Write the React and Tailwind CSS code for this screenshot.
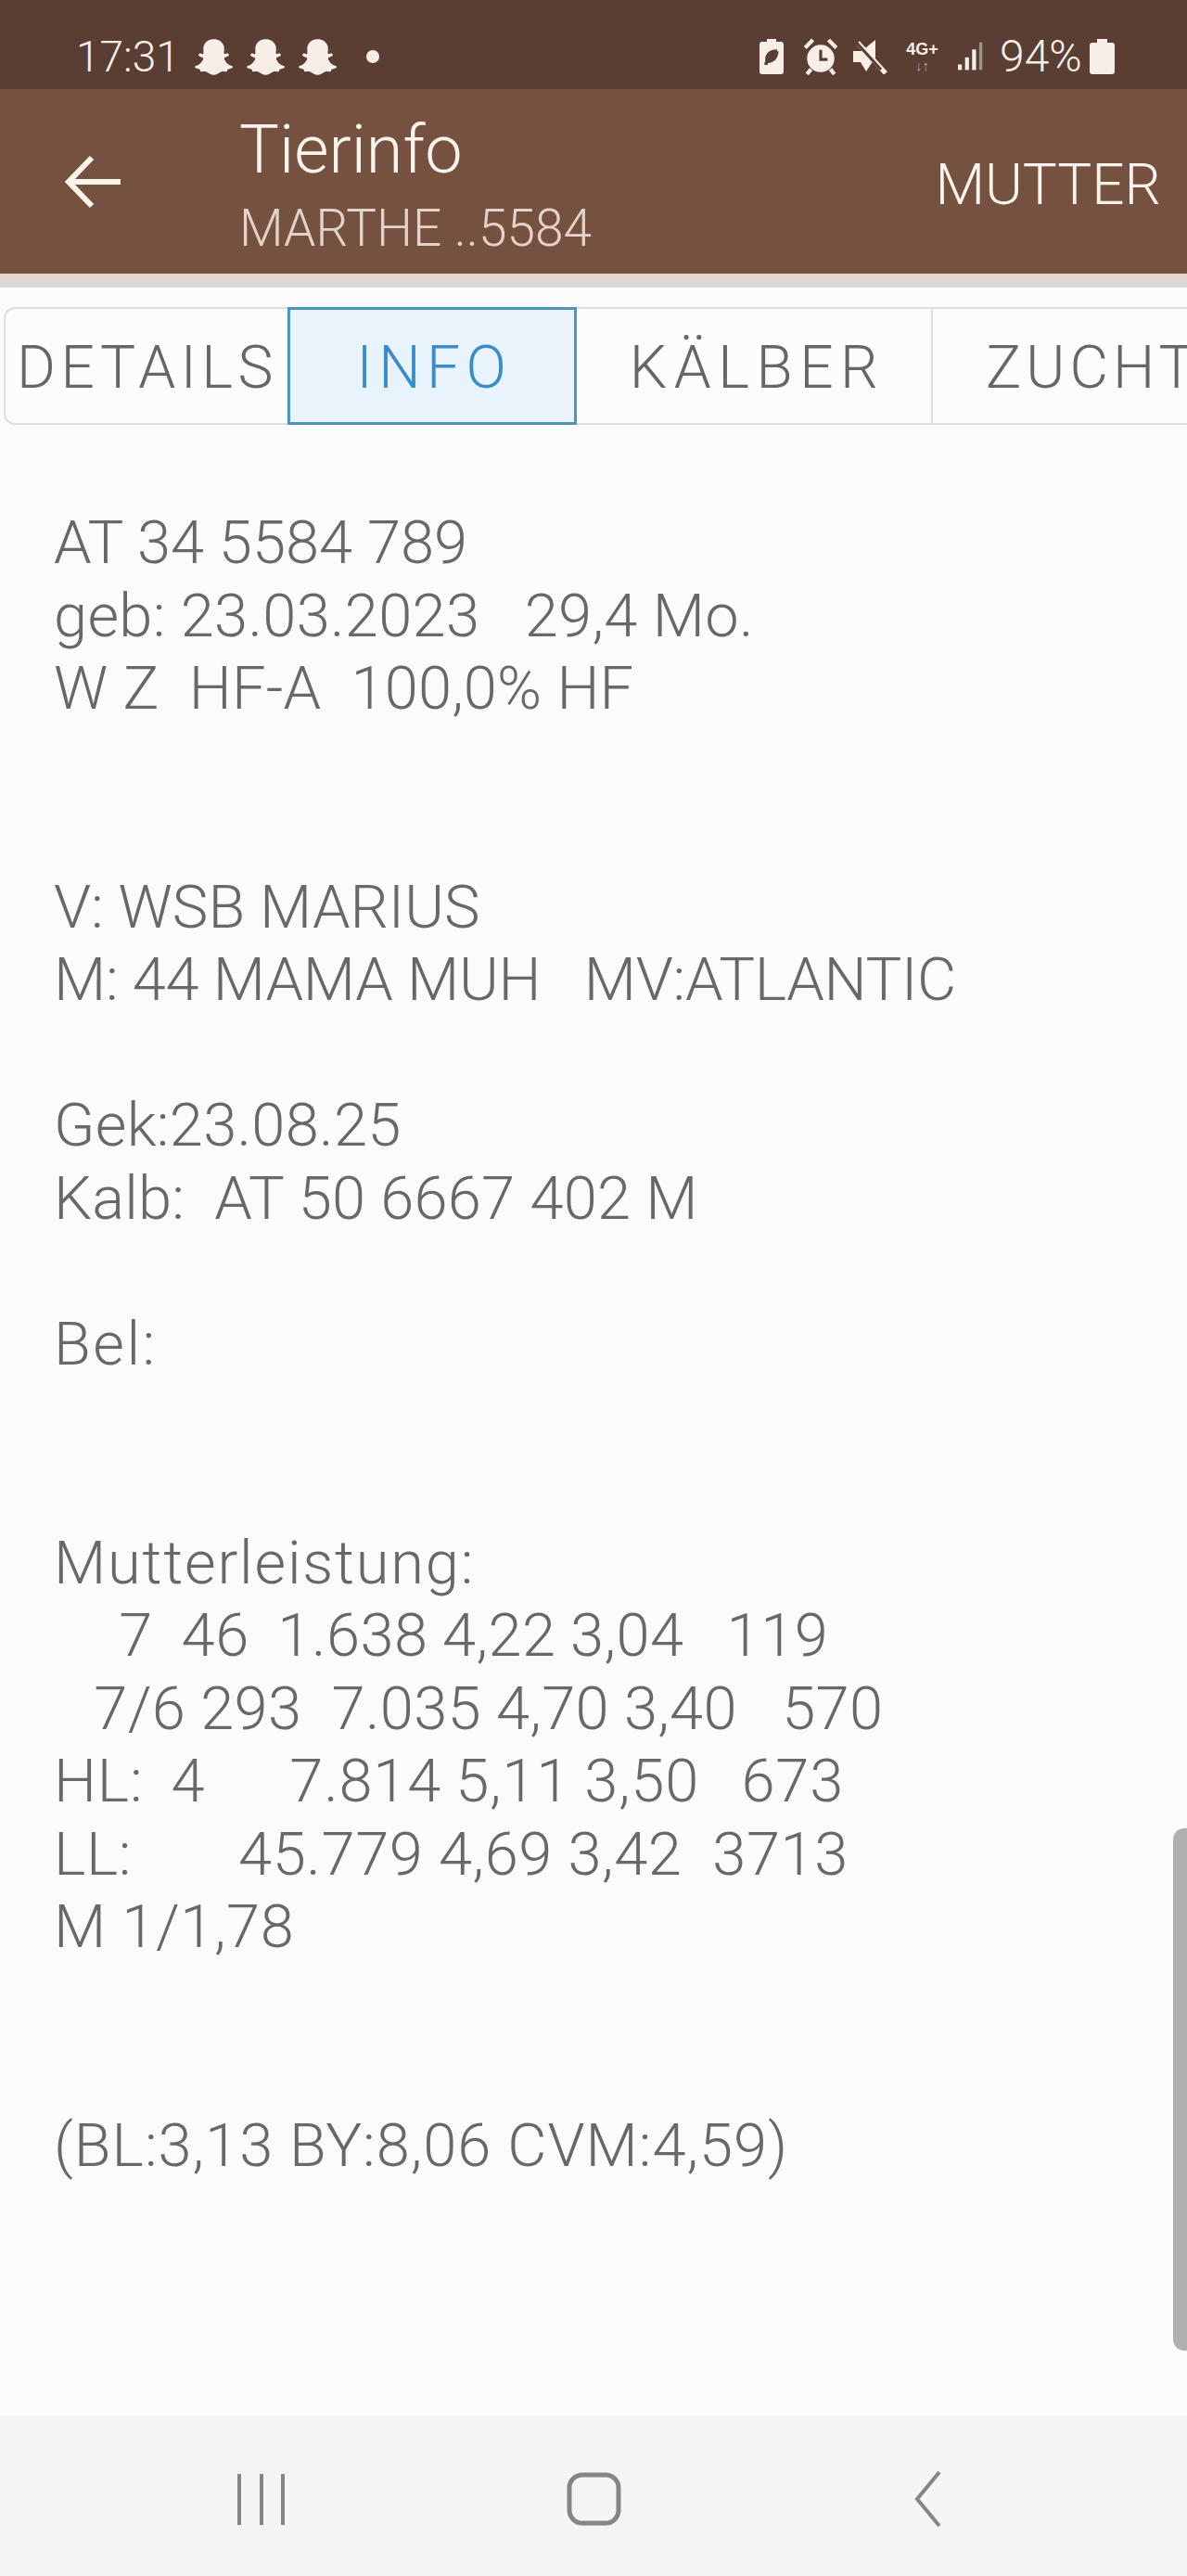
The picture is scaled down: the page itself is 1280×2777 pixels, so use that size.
import { FaSnapchatGhost } from 'react-icons/fa';

const bodyLines = [
  ['AT 34 5584 789', ''],
  ['geb: 23.03.2023   29,4 Mo.', 'tracking-[0.3px]'],
  ['W Z  HF-A  100,0% HF', 'tracking-[0.2px]'],
  ['', ''],
  ['', ''],
  ['V: WSB MARIUS', ''],
  ['M: 44 MAMA MUH   MV:ATLANTIC', 'tracking-[-0.3px]'],
  ['', ''],
  ['Gek:23.08.25', 'tracking-[0.3px]'],
  ['Kalb:  AT 50 6667 402 M', 'tracking-[0.2px]'],
  ['', ''],
  ['Bel:', 'tracking-[2.5px]'],
  ['', ''],
  ['', ''],
  ['Mutterleistung:', 'tracking-[1.8px]'],
  ['    7  46  1.638 4,22 3,04   119', 'ml-[9px] tracking-[0.5px] [word-spacing:-1px]'],
  ['  7/6 293  7.035 4,70 3,40   570', 'ml-[11px] tracking-[0.3px]'],
  ['HL:  4      7.814 5,11 3,50   673', 'tracking-[0.8px] [word-spacing:-1.5px]'],
  ['LL:       45.779 4,69 3,42  3713', 'tracking-[0.6px]'],
  ['M 1/1,78', 'tracking-[0.6px]'],
  ['', ''],
  ['', ''],
  ['(BL:3,13 BY:8,06 CVM:4,59)', 'tracking-[1px]'],
];

function StatusIcons() {
  return (
    <div className="flex items-center text-[#f7eee8]">
      {/* akku mit blatt */}
      <svg width="26" height="38" viewBox="0 0 26 38" className="mr-[22px]">
        <path d="M8 0h10v3h5a3 3 0 0 1 3 3v29a3 3 0 0 1-3 3H3a3 3 0 0 1-3-3V6a3 3 0 0 1 3-3h5z" fill="currentColor" />
        <path d="M19 13c-8 0-12 4-11 11-1 2-1 3-1 4M8 24c6 1 10-3 11-11" stroke="#5a3e33" strokeWidth="3.5" fill="#5a3e33" />
      </svg>
      {/* wecker */}
      <svg width="36" height="40" viewBox="0 0 34 38" className="mr-[16px]">
        <circle cx="17" cy="21" r="14" fill="currentColor" />
        <path d="M1 10 9 2M33 10l-8-8M7 32l-4 5M27 32l4 5" stroke="currentColor" strokeWidth="4" />
        <path d="M17 12v10h7" stroke="#5a3e33" strokeWidth="3" fill="none" />
      </svg>
      {/* stumm */}
      <svg width="38" height="38" viewBox="0 0 36 38" className="mr-[17px]">
        <path d="M0 13h9L24 1v19L14 35 8 25H0z" fill="currentColor" />
        <path d="M5 4l30 33" stroke="currentColor" strokeWidth="5" />
        <path d="M0 0l30 33" stroke="#5a3e33" strokeWidth="3" />
      </svg>
      <div className="mr-[18px] flex w-[41px] flex-col items-center font-['Liberation_Sans',sans-serif] leading-none">
        <span className="text-[18px] font-bold">4G+</span>
        <span className="mt-[1px] text-[15px] text-[#b5a59c]">↓↑</span>
      </div>
      {/* signal */}
      <svg width="28" height="36" viewBox="0 0 33 36" className="mr-[17px]">
        <rect x="0" y="28" width="5" height="7" fill="currentColor" />
        <rect x="9" y="19" width="5" height="16" fill="currentColor" />
        <rect x="18" y="9" width="5" height="26" fill="currentColor" />
        <rect x="27" y="0" width="4" height="35" fill="#a39289" />
      </svg>
      <span className="w-[92px] text-[48px] font-light leading-none">94%</span>
      {/* akku */}
      <svg width="27" height="38" viewBox="0 0 27 38" className="ml-[5px]">
        <path d="M8 0h11v4h5a3 3 0 0 1 3 3v28a3 3 0 0 1-3 3H3a3 3 0 0 1-3-3V7a3 3 0 0 1 3-3h5z" fill="currentColor" />
      </svg>
    </div>
  );
}

export default function App() {
  return (
    <div className="relative flex h-[2777px] w-[1280px] flex-col overflow-hidden bg-[#fbfbfb] font-['Roboto',sans-serif]">
      {/* Statusleiste */}
      <div className="flex h-[96px] shrink-0 items-center justify-between bg-[#5a3e33] pl-[82px] pr-[78px] pt-[26px]">
        <div className="flex items-center text-[#f7eee8]">
          <span className="w-[128px] text-[46px] font-light leading-none">17:31</span>
          <div className="flex gap-[15px]">
            <FaSnapchatGhost size={41} />
            <FaSnapchatGhost size={41} />
            <FaSnapchatGhost size={41} />
          </div>
          <div className="ml-[32px] size-[14px] rounded-full bg-[#f7eee8]" />
        </div>
        <StatusIcons />
      </div>

      {/* Titelleiste */}
      <div className="flex h-[199px] shrink-0 items-center bg-[#75513f] pr-[28px] text-[#fbf3ec]">
        <div className="ml-[70px] w-[188px]">
          <svg width="62" height="58" viewBox="0 0 62 58" fill="none" stroke="currentColor" strokeWidth="6">
            <path d="M60 29H6M29 3 4 29l25 26" />
          </svg>
        </div>
        <div className="flex-1 pt-[7px]">
          <div className="text-[72px] font-light leading-[80px]">Tierinfo</div>
          <div className="mt-[13px] text-[55px] font-light leading-[62px] text-[#e4d3ca]">MARTHE ..5584</div>
        </div>
        <span className="pt-[6px] text-[62px] font-light leading-none">MUTTER</span>
      </div>
      <div className="h-[15px] shrink-0 bg-gradient-to-b from-[#e6d4cd] to-[#dcd8d5]" />

      {/* Tabs */}
      <div className="ml-[4px] mt-[21px] flex h-[127px] shrink-0">
        <div className="flex w-[306px] items-center rounded-l-[12px] border-y-2 border-l-2 border-[#dedede] bg-[#fcfcfc] pl-[12px] pt-[5px] text-[64px] font-light tracking-[5.5px] text-[#666666]">DETAILS</div>
        <div className="flex w-[312px] items-center justify-center border-[3px] border-[#4a94bd] bg-[#e9f3fb] pl-[5px] pt-[5px] text-[64px] font-light tracking-[6.5px] text-[#3a8dcc]">INFO</div>
        <div className="flex w-[384px] items-center justify-center border-y-2 border-r-2 border-[#dedede] bg-[#fcfcfc] pl-[7px] pt-[5px] text-[64px] font-light tracking-[7.5px] text-[#666666]">KÄLBER</div>
        <div className="flex flex-1 items-center overflow-hidden border-y-2 border-[#dedede] bg-[#fcfcfc] pl-[57px] pt-[5px] text-[64px] font-light tracking-[5px] text-[#666666]">ZUCHT</div>
      </div>

      {/* Inhalt */}
      <div className="relative flex-1 pl-[58px] pt-[88px]">
        <div className="whitespace-pre text-[65px] font-light leading-[78.55px] text-[#686868]">
          {bodyLines.map(([line, cls], i) => (
            <div key={i} className={`h-[78.55px] ${cls}`}>{line}</div>
          ))}
        </div>
        <div className="absolute right-0 top-[1513px] h-[563px] w-[15px] rounded-l-[12px] bg-[#b0b0b0]" />
      </div>

      {/* Navigationsleiste */}
      <div className="flex h-[173px] shrink-0 bg-[#f4f5f7] text-[#858585]">
        <svg width="1280" height="173" viewBox="0 0 1280 173" fill="none" stroke="currentColor">
          <path d="M258 63v55M282 63v55M305 63v55" strokeWidth="4" />
          <rect x="614" y="64" width="53" height="52" rx="14" strokeWidth="5" />
          <path d="M1013 61 989 90l24 29" strokeWidth="4" />
        </svg>
      </div>
    </div>
  );
}
